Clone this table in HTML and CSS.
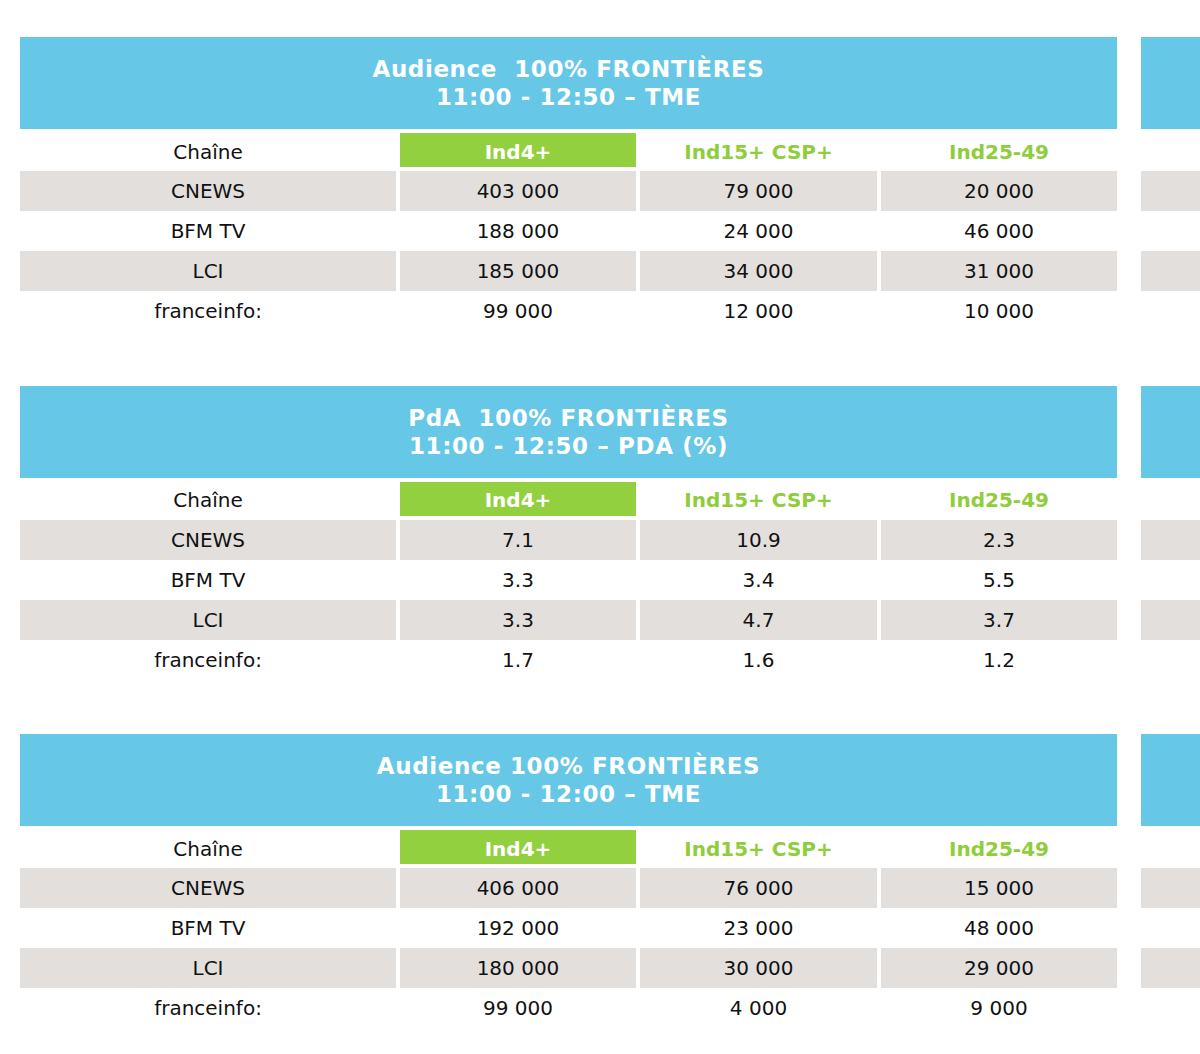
FILE: index.html
```html
<!DOCTYPE html>
<html lang="fr">
<head>
<meta charset="utf-8">
<title>Audiences</title>
<link rel="stylesheet" href="styles.css">
</head>
<body>
<div class="page">
  <div class="column">
    <section class="table">
      <div class="banner"><div class="title">Audience&nbsp; 100% FRONTIÈRES</div><div class="title">11:00 - 12:50 – TME</div></div>
      <div class="thead">
        <div class="hc">Chaîne</div><div class="hc green">Ind4+</div><div class="hc gtext">Ind15+ CSP+</div><div class="hc gtext">Ind25-49</div>
      </div>
      <div class="tbody">
        <div class="c g">CNEWS</div><div class="c g">403 000</div><div class="c g">79 000</div><div class="c g">20 000</div>
        <div class="c">BFM TV</div><div class="c">188 000</div><div class="c">24 000</div><div class="c">46 000</div>
        <div class="c g">LCI</div><div class="c g">185 000</div><div class="c g">34 000</div><div class="c g">31 000</div>
        <div class="c">franceinfo:</div><div class="c">99 000</div><div class="c">12 000</div><div class="c">10 000</div>
      </div>
    </section>
    <section class="table">
      <div class="banner"><div class="title">PdA&nbsp; 100% FRONTIÈRES</div><div class="title">11:00 - 12:50 – PDA (%)</div></div>
      <div class="thead">
        <div class="hc">Chaîne</div><div class="hc green">Ind4+</div><div class="hc gtext">Ind15+ CSP+</div><div class="hc gtext">Ind25-49</div>
      </div>
      <div class="tbody">
        <div class="c g">CNEWS</div><div class="c g">7.1</div><div class="c g">10.9</div><div class="c g">2.3</div>
        <div class="c">BFM TV</div><div class="c">3.3</div><div class="c">3.4</div><div class="c">5.5</div>
        <div class="c g">LCI</div><div class="c g">3.3</div><div class="c g">4.7</div><div class="c g">3.7</div>
        <div class="c">franceinfo:</div><div class="c">1.7</div><div class="c">1.6</div><div class="c">1.2</div>
      </div>
    </section>
    <section class="table">
      <div class="banner"><div class="title">Audience 100% FRONTIÈRES</div><div class="title">11:00 - 12:00 – TME</div></div>
      <div class="thead">
        <div class="hc">Chaîne</div><div class="hc green">Ind4+</div><div class="hc gtext">Ind15+ CSP+</div><div class="hc gtext">Ind25-49</div>
      </div>
      <div class="tbody">
        <div class="c g">CNEWS</div><div class="c g">406 000</div><div class="c g">76 000</div><div class="c g">15 000</div>
        <div class="c">BFM TV</div><div class="c">192 000</div><div class="c">23 000</div><div class="c">48 000</div>
        <div class="c g">LCI</div><div class="c g">180 000</div><div class="c g">30 000</div><div class="c g">29 000</div>
        <div class="c">franceinfo:</div><div class="c">99 000</div><div class="c">4 000</div><div class="c">9 000</div>
      </div>
    </section>
  </div>
  <div class="column" aria-hidden="true">
    <section class="table">
      <div class="banner"></div>
      <div class="thead"><div class="hc"></div><div class="hc"></div><div class="hc"></div><div class="hc"></div></div>
      <div class="tbody">
        <div class="c g"></div><div class="c g"></div><div class="c g"></div><div class="c g"></div>
        <div class="c"></div><div class="c"></div><div class="c"></div><div class="c"></div>
        <div class="c g"></div><div class="c g"></div><div class="c g"></div><div class="c g"></div>
        <div class="c"></div><div class="c"></div><div class="c"></div><div class="c"></div>
      </div>
    </section>
    <section class="table">
      <div class="banner"></div>
      <div class="thead"><div class="hc"></div><div class="hc"></div><div class="hc"></div><div class="hc"></div></div>
      <div class="tbody">
        <div class="c g"></div><div class="c g"></div><div class="c g"></div><div class="c g"></div>
        <div class="c"></div><div class="c"></div><div class="c"></div><div class="c"></div>
        <div class="c g"></div><div class="c g"></div><div class="c g"></div><div class="c g"></div>
        <div class="c"></div><div class="c"></div><div class="c"></div><div class="c"></div>
      </div>
    </section>
    <section class="table">
      <div class="banner"></div>
      <div class="thead"><div class="hc"></div><div class="hc"></div><div class="hc"></div><div class="hc"></div></div>
      <div class="tbody">
        <div class="c g"></div><div class="c g"></div><div class="c g"></div><div class="c g"></div>
        <div class="c"></div><div class="c"></div><div class="c"></div><div class="c"></div>
        <div class="c g"></div><div class="c g"></div><div class="c g"></div><div class="c g"></div>
        <div class="c"></div><div class="c"></div><div class="c"></div><div class="c"></div>
      </div>
    </section>
  </div>
</div>
</body>
</html>
```

FILE: styles.css
```css
html, body {
  margin: 0;
  padding: 0;
  background: #ffffff;
  overflow: hidden;
}
body {
  width: 1200px;
  height: 1054px;
  font-family: "DejaVu Sans", Verdana, sans-serif;
  color: #111111;
}
.page {
  display: flex;
  gap: 24px;
  padding: 37px 0 0 20px;
  width: max-content;
}
.column {
  width: 1097px;
  flex-shrink: 0;
  display: flex;
  flex-direction: column;
  gap: 54.5px;
}
.banner {
  height: 92px;
  background: #66c7e7;
  display: flex;
  flex-direction: column;
  align-items: center;
  justify-content: center;
}
.title {
  color: #ffffff;
  font-weight: bold;
  font-size: 23px;
  letter-spacing: 0.6px;
  line-height: 28px;
  white-space: nowrap;
}
.thead, .tbody {
  display: grid;
  grid-template-columns: 376px 236px 237px 236px;
  column-gap: 4px;
  margin-top: 4px;
}
.thead {
  grid-auto-rows: 34px;
}
.tbody {
  grid-auto-rows: 40px;
}
.hc, .c {
  display: flex;
  align-items: center;
  justify-content: center;
  font-size: 20px;
  white-space: nowrap;
}
.hc {
  padding-top: 3px;
  box-sizing: border-box;
}
.hc.green {
  background: #92d040;
  color: #ffffff;
  font-weight: bold;
}
.hc.gtext {
  color: #8fcd3c;
  font-weight: bold;
}
.c.g {
  background: #e2dfdd;
}
```
